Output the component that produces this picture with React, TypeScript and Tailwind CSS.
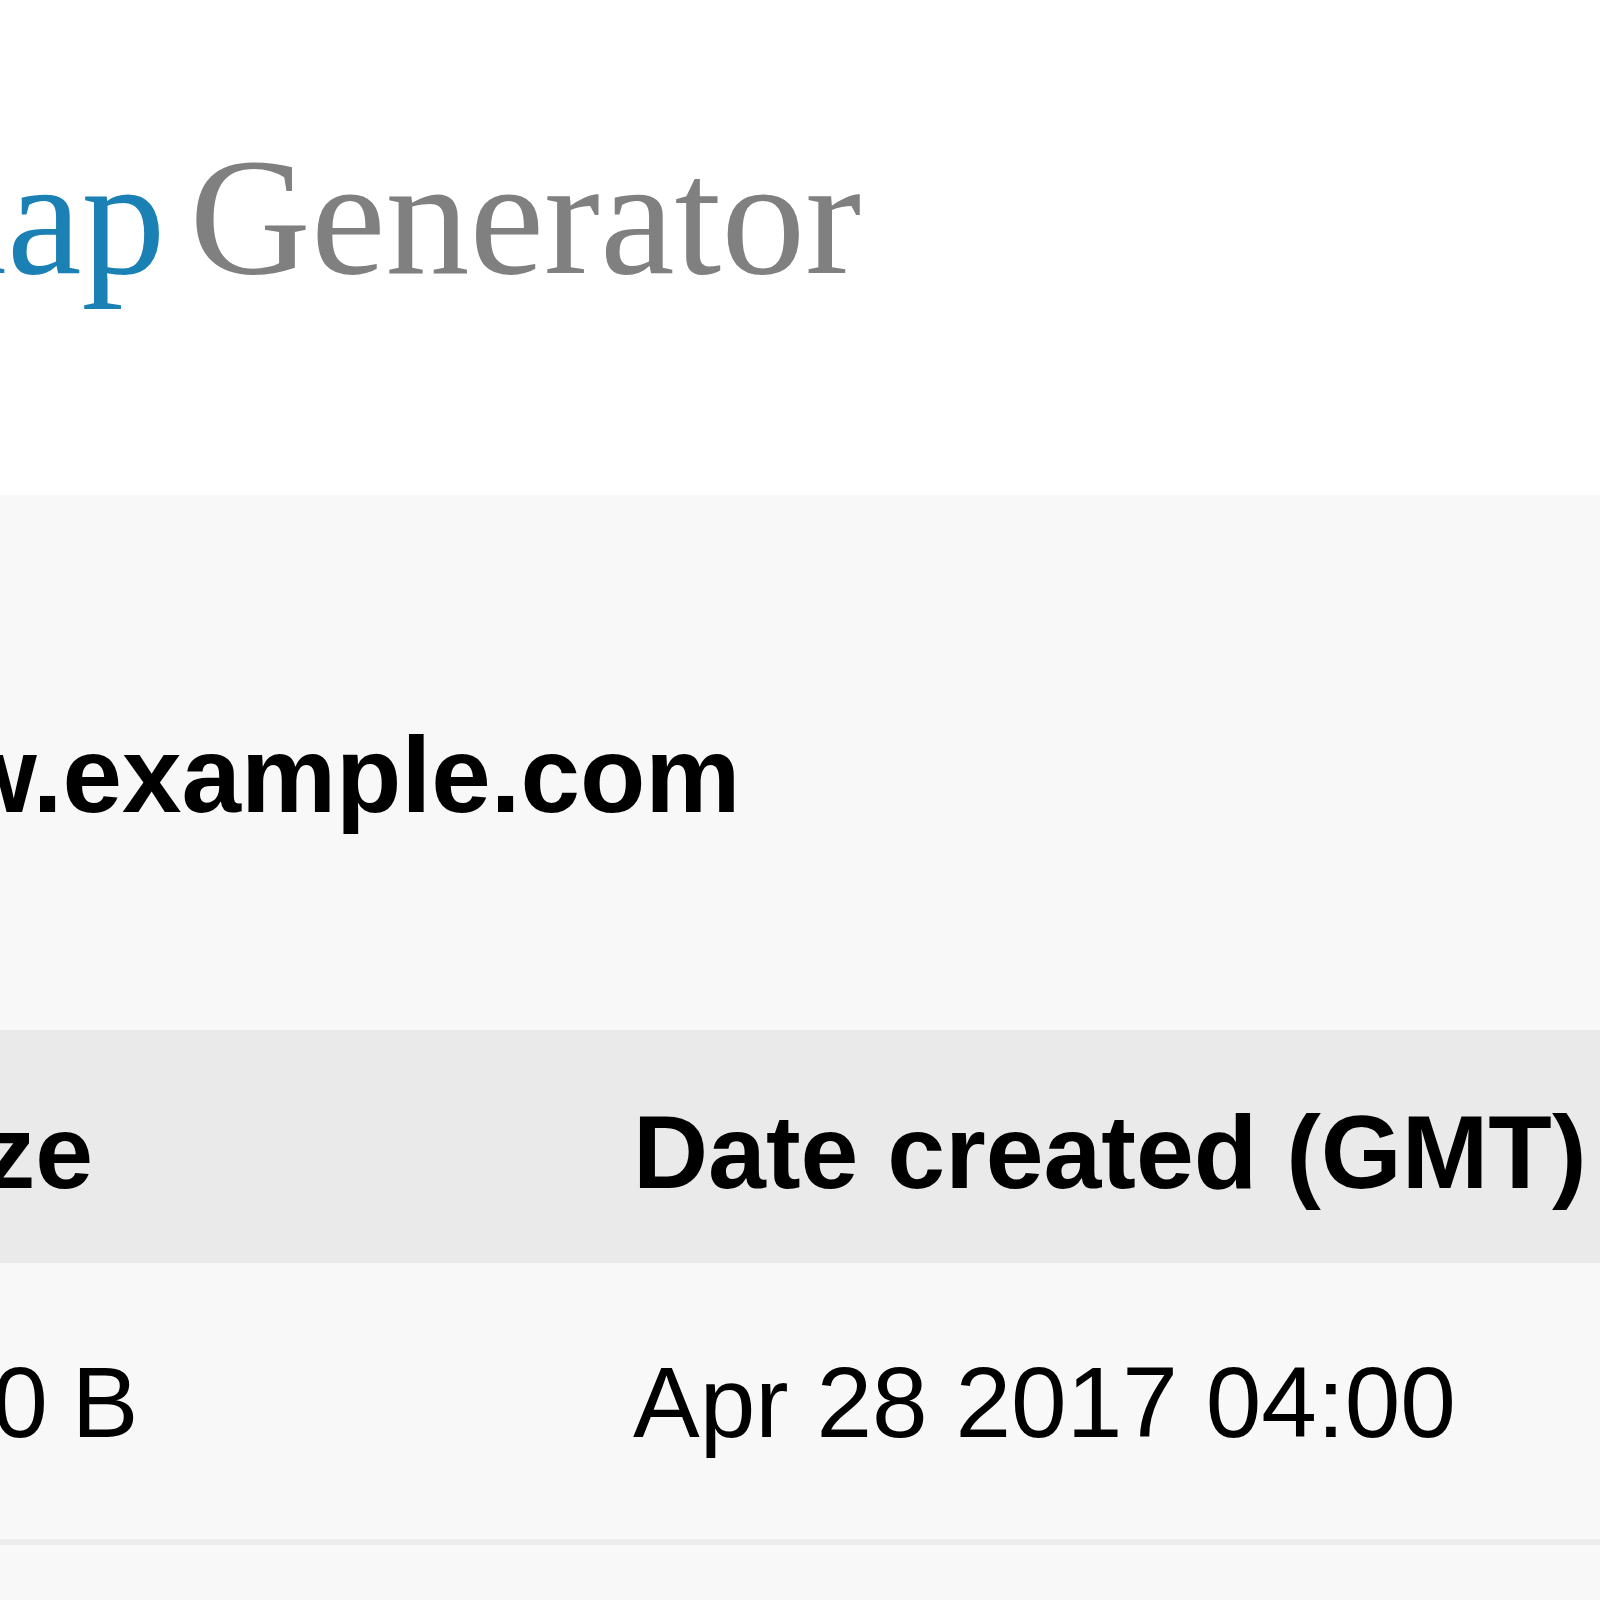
export default function App() {
  return (
    <div className="w-[1600px] h-[1600px] overflow-hidden bg-white font-['Liberation_Sans',Arial,sans-serif] text-black">
      {/* logo strip */}
      <div className="h-[495px] pt-[132px]">
        <div className="flex items-baseline whitespace-nowrap font-['Liberation_Serif','Times_New_Roman',serif] text-[168px] leading-none">
          <span className="ml-[-385px] text-[#1b80b3]">Sitemap</span>
          <span className="ml-[24px] text-[#808080]">Generator</span>
        </div>
      </div>

      {/* sitemap panel */}
      <div className="h-[1105px] bg-[#f8f8f8]">
        <div className="pt-[227px] whitespace-nowrap text-[107px] font-bold leading-none">
          <span className="ml-[-213px] inline-block">www.example.com</span>
        </div>

        <div className="mt-[201px]">
          <div className="flex whitespace-nowrap bg-[#eaeaea] pt-[70px] pb-[59px] text-[104px] font-bold leading-none">
            <div className="ml-[-115px] w-[748px] shrink-0">Size</div>
            <div className="shrink-0">Date created (GMT)</div>
          </div>
          <div className="flex whitespace-nowrap border-b-[6px] border-[#ececec] pt-[89px] pb-[87px] text-[100px] leading-none">
            <div className="ml-[-115px] w-[748px] shrink-0 tracking-[-2px]">100 B</div>
            <div className="shrink-0">Apr 28 2017 04:00</div>
          </div>
        </div>
      </div>
    </div>
  );
}
